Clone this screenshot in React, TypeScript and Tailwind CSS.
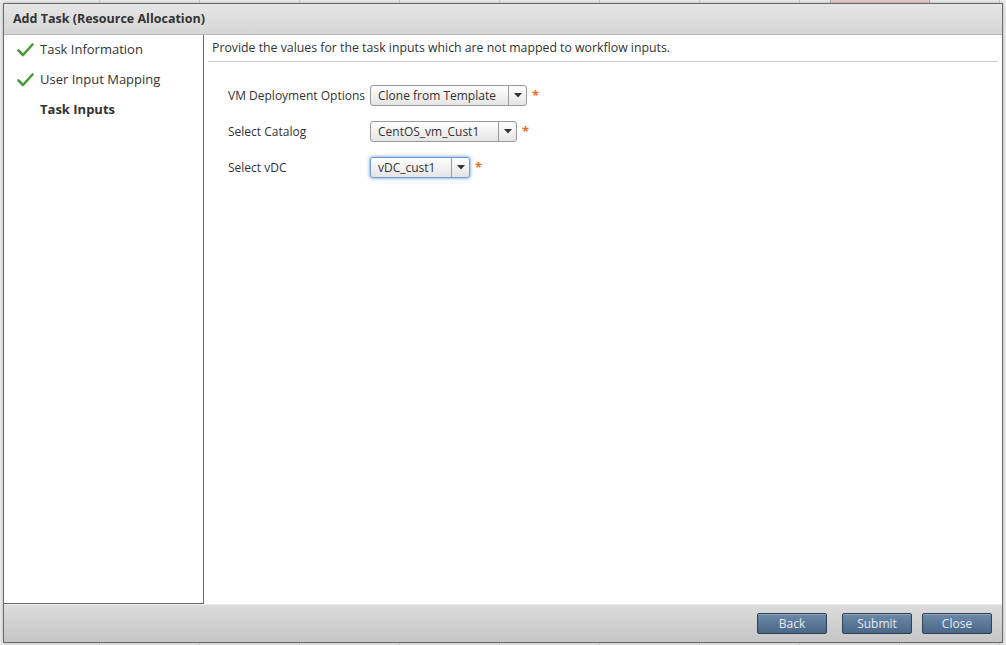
import React from "react";

function Check() {
  return (
    <svg width="17" height="14" viewBox="0 0 17 14" className="shrink-0">
      <path d="M1.5 7.5 L6 12 L15.5 1.5" fill="none" stroke="#4c9b3c" strokeWidth="2.6" strokeLinecap="round" strokeLinejoin="round" />
    </svg>
  );
}

function Select({ value, width, focused }: { value: string; width: number; focused?: boolean }) {
  return (
    <div className="flex items-center gap-[5px]">
      <div
        style={{ width }}
        className={
          "flex h-[21px] items-stretch rounded-[3px] border bg-gradient-to-b from-[#ffffff] to-[#e4e4e4] " +
          (focused ? "border-[#6f9bd1] shadow-[0_0_3px_1px_rgba(110,160,220,0.7)]" : "border-[#9a9a9a]")
        }
      >
        <div className="flex flex-1 items-center whitespace-nowrap pl-[7px] text-[12px] text-[#333]">{value}</div>
        <div className="flex w-[18px] items-center justify-center border-l border-[#9a9a9a]">
          <svg width="8" height="5" viewBox="0 0 8 5">
            <path d="M0 0 H8 L4 4.5 Z" fill="#333" />
          </svg>
        </div>
      </div>
      <span className="text-[13px] font-bold leading-none text-[#f26b1d]">*</span>
    </div>
  );
}

function Row({ label, value, width, focused }: { label: string; value: string; width: number; focused?: boolean }) {
  return (
    <div className="flex h-[21px] items-center">
      <div className="w-[142px] whitespace-nowrap text-[12px] text-[#333]">{label}</div>
      <Select value={value} width={width} focused={focused} />
    </div>
  );
}

function Btn({ children }: { children: React.ReactNode }) {
  return (
    <button className="flex h-[21px] w-[70px] items-center justify-center rounded-[2px] border border-[#2e4257] bg-gradient-to-b from-[#6d8aa9] to-[#4b6686] text-[12px] text-[#e2eaf3] shadow-[inset_0_1px_0_rgba(255,255,255,0.25)]">
      {children}
    </button>
  );
}

export default function App() {
  return (
    <div
      className="relative h-[645px] w-[1006px] overflow-hidden bg-[#ededed]"
      style={{ fontFamily: '"Open Sans", "Liberation Sans", Arial, sans-serif' }}
    >
      {/* background grid */}
      <div className="absolute inset-0 flex">
        {Array.from({ length: 10 }).map((_, i) => (
          <div key={i} className="h-full w-[100px] shrink-0 border-r border-[#d4d4d4]" />
        ))}
      </div>
      <div className="absolute left-[830px] top-[-6px] h-[10px] w-[100px] border border-[#bdb0b0] bg-[#e7cccc]" />

      {/* dialog */}
      <div className="absolute left-[3px] top-[3px] flex h-[640px] w-[1000px] flex-col border border-[#6a6a6a] bg-white shadow-[0_0_4px_rgba(0,0,0,0.25)]">
        <div className="flex h-[31px] items-center border-b border-[#b4b4b4] bg-gradient-to-b from-[#e6e6e6] to-[#d6d6d6] pl-[9px]">
          <span className="text-[12.5px] font-bold text-[#333]">Add Task (Resource Allocation)</span>
        </div>
        <div className="flex flex-1">
          <div className="flex w-[200px] flex-col border-r border-b border-[#6a6a6a]">
            <div className="flex h-[30px] items-center gap-[6px] pl-[13px]">
              <Check />
              <span className="text-[13px] text-[#333]">Task Information</span>
            </div>
            <div className="flex h-[30px] items-center gap-[6px] pl-[13px]">
              <Check />
              <span className="text-[13px] text-[#333]">User Input Mapping</span>
            </div>
            <div className="flex h-[30px] items-center pl-[36px]">
              <span className="text-[13px] font-bold text-[#333]">Task Inputs</span>
            </div>
          </div>
          <div className="flex flex-1 flex-col pl-[4px] pr-[4px]">
            <div className="flex h-[27px] items-center border-b border-[#cccccc] pl-[4px] text-[12.3px] text-[#333]">
              Provide the values for the task inputs which are not mapped to workflow inputs.
            </div>
            <div className="flex flex-col gap-[15px] pl-[20px] pt-[23px]">
              <Row label="VM Deployment Options" value="Clone from Template" width={157} />
              <Row label="Select Catalog" value="CentOS_vm_Cust1" width={147} />
              <Row label="Select vDC" value="vDC_cust1" width={100} focused />
            </div>
          </div>
        </div>
        <div className="flex h-[38px] items-center justify-end border-t border-[#ececec] bg-gradient-to-b from-[#dcdcdc] to-[#c6c6c6] pr-[10px]">
          <Btn>Back</Btn>
          <div className="w-[15px]" />
          <Btn>Submit</Btn>
          <div className="w-[10px]" />
          <Btn>Close</Btn>
        </div>
      </div>
    </div>
  );
}
